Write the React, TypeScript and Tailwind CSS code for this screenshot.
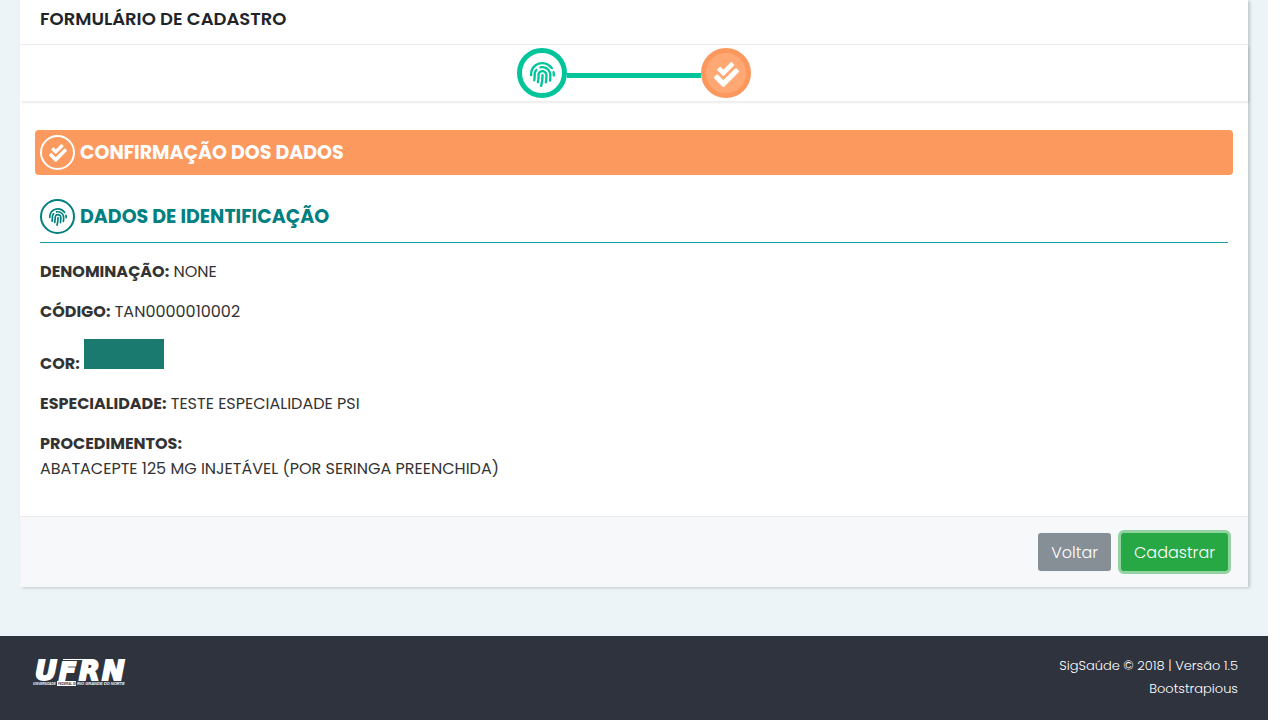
import type { ReactNode } from "react";
import { FaCheckDouble, FaFingerprint } from "react-icons/fa";

function UfrnLogo() {
  return (
    <svg width="100" height="34" viewBox="0 0 100 34" role="img" aria-label="UFRN" className="block">
      <g
        fill="#fff"
        stroke="#fff"
        strokeWidth="2"
        fontSize="27"
        fontWeight="700"
        fontStyle="italic"
        fontFamily="'DejaVu Sans', sans-serif"
      >
        <text x="5" y="26">U</text>
        <text x="29" y="26" fontSize="25">F</text>
        <text x="49" y="26">R</text>
        <text x="72" y="26">N</text>
      </g>
      <path d="M33 5H54V6H33Z" fill="#fff" />
      <path d="M27 27H46V32H27Z" fill="#fff" />
      <g fontSize="3" fontWeight="700" fontStyle="italic" fontFamily="'Liberation Sans', sans-serif">
        <text x="3" y="31" fill="#fff">UNIVERSIDADE</text>
        <text x="28" y="31" fill="#2f333e">FEDERAL DO</text>
        <text x="47" y="31" fill="#fff" fontSize="4">RIO GRANDE DO NORTE</text>
      </g>
    </svg>
  );
}

function Field({ label, children }: { label: string; children: ReactNode }) {
  return (
    <p className="mb-[15px] leading-[25px]">
      <strong className="font-bold">{label}:</strong> {children}
    </p>
  );
}

export default function App() {
  return (
    <div className="bg-white pr-3 font-[Poppins,Inter,sans-serif] text-base font-light text-[#333]">
      <div className="flex min-h-screen flex-col bg-[#ecf4f8]">
        <main className="mx-5 mb-12 bg-white shadow-[2px_1px_3px_rgba(0,0,0,0.18)]">
          <header className="border-b border-[#eaebec] px-5 pt-1.5 pb-3">
            <h1 className="text-lg leading-[26px] font-semibold text-[#212529]">FORMULÁRIO DE CADASTRO</h1>
          </header>

          <nav aria-label="Etapas" className="flex items-center justify-center py-[3px] shadow-[2px_2px_2px_rgba(0,0,0,0.08)]">
            <span className="flex size-[50px] items-center justify-center rounded-full border-[5px] border-[#00c49a] pt-0.5 text-[#00c49a]">
              <FaFingerprint size={25} />
            </span>
            <span className="mt-1 h-[5px] w-[134px] bg-[#00c49a]" />
            <span className="flex size-[50px] items-center justify-center rounded-full border-[5px] border-[#fc985d] bg-[#ffa873] pt-0.5 text-white">
              <FaCheckDouble size={25} />
            </span>
          </nav>

          <div className="px-[15px] pt-[29px] pb-[35px]">
            <h2 className="flex items-center gap-[5px] rounded bg-[#fc995f] p-[5px] text-[19px] leading-6 font-bold text-white">
              <span className="flex size-[35px] items-center justify-center rounded-full border-2 border-white">
                <FaCheckDouble size={18} />
              </span>
              CONFIRMAÇÃO DOS DADOS
            </h2>

            <section className="px-[5px] pt-6 font-normal">
              <h3 className="mb-4 flex items-center gap-[5px] border-b border-[#17a2a8] pb-2 text-[19px] leading-6 font-bold text-[#008080]">
                <span className="flex size-[35px] items-center justify-center rounded-full border-2 border-[#008080]">
                  <FaFingerprint size={18} />
                </span>
                DADOS DE IDENTIFICAÇÃO
              </h3>
              <Field label="DENOMINAÇÃO">NONE</Field>
              <Field label="CÓDIGO">TAN0000010002</Field>
              <Field label="COR">
                <span className="inline-block h-[30px] w-20 bg-[#1a7a70]" />
              </Field>
              <Field label="ESPECIALIDADE">TESTE ESPECIALIDADE PSI</Field>
              <strong className="block leading-[25px] font-bold">PROCEDIMENTOS:</strong>
              <p className="leading-[25px]">ABATACEPTE 125 MG INJETÁVEL (POR SERINGA PREENCHIDA)</p>
            </section>
          </div>

          <div className="flex justify-end gap-2.5 border-t border-[#e9ebed] bg-[#f7f8fa] px-5 py-4">
            <button type="button" className="h-[38px] rounded-[3px] bg-[#868e96] px-[13px] pt-0.5 text-white">
              Voltar
            </button>
            <button type="button" className="h-[38px] rounded-[3px] bg-[#28a745] px-[13px] pt-0.5 text-white ring-3 ring-[#93d3a2]">
              Cadastrar
            </button>
          </div>
        </main>

        <footer className="mt-auto flex items-start justify-between bg-[#2f333e] px-[30px] pt-[18px] pb-5 text-[13px] leading-[23px] text-white">
          <UfrnLogo />
          <div className="text-right">
            <p>SigSaúde © 2018 | Versão 1.5</p>
            <a href="#" className="block">Bootstrapious</a>
          </div>
        </footer>
      </div>
    </div>
  );
}
